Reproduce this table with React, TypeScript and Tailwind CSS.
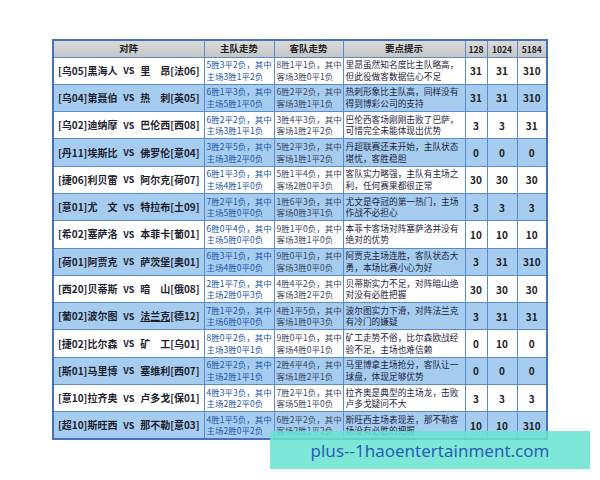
import React from "react";

type Row = {
  hl: string; // left tag
  hn: string; // home name
  al: string; // away tag
  an: string; // away name
  home: [string, string];
  away: [string, string];
  tip: [string, string];
  n: [string, string, string];
  link?: boolean;
};

const rows: Row[] = [
  { hl: "[乌05]", hn: "黑海人", an: "里昂", al: "[法06]", home: ["5胜3平2负，其中", "主场3胜1平2负"], away: ["8胜1平1负，其中", "客场3胜0平1负"], tip: ["里昂虽然知名度比主队略高，", "但此役做客数据信心不足"], n: ["31", "31", "310"] },
  { hl: "[乌04]", hn: "第聂伯", an: "热刺", al: "[英05]", home: ["6胜1平3负，其中", "主场5胜1平0负"], away: ["6胜2平2负，其中", "客场3胜1平1负"], tip: ["热刺形象比主队高，同样没有", "得到博彩公司的支持"], n: ["31", "31", "310"] },
  { hl: "[乌02]", hn: "迪纳摩", an: "巴伦西", al: "[西08]", home: ["6胜2平2负，其中", "主场3胜1平1负"], away: ["3胜4平3负，其中", "客场1胜2平2负"], tip: ["巴伦西客场刚刚击败了巴萨，", "可惜完全未能体现出优势"], n: ["3", "3", "31"] },
  { hl: "[丹11]", hn: "埃斯比", an: "佛罗伦", al: "[意04]", home: ["3胜2平5负，其中", "主场3胜2平0负"], away: ["5胜2平3负，其中", "客场1胜1平2负"], tip: ["丹超联赛还未开始，主队状态", "堪忧，客胜稳胆"], n: ["0", "0", "0"] },
  { hl: "[捷06]", hn: "利贝雷", an: "阿尔克", al: "[荷07]", home: ["6胜1平3负，其中", "主场4胜1平0负"], away: ["5胜1平4负，其中", "客场2胜0平3负"], tip: ["客队实力略强，主队有主场之", "利，任何赛果都很正常"], n: ["30", "30", "30"] },
  { hl: "[意01]", hn: "尤文", an: "特拉布", al: "[土09]", home: ["7胜2平1负，其中", "主场5胜0平0负"], away: ["1胜6平3负，其中", "客场0胜3平1负"], tip: ["尤文是夺冠的第一热门，主场", "作战不必担心"], n: ["3", "3", "3"] },
  { hl: "[希02]", hn: "塞萨洛", an: "本菲卡", al: "[葡01]", home: ["6胜0平4负，其中", "主场5胜0平0负"], away: ["9胜1平0负，其中", "客场3胜1平0负"], tip: ["本菲卡客场对阵塞萨洛并没有", "绝对的优势"], n: ["10", "10", "10"] },
  { hl: "[荷01]", hn: "阿贾克", an: "萨茨堡", al: "[奥01]", home: ["6胜3平1负，其中", "主场4胜0平0负"], away: ["9胜0平1负，其中", "客场3胜0平0负"], tip: ["阿贾克主场连胜，客队状态大", "勇，本场比赛小心为好"], n: ["3", "31", "310"] },
  { hl: "[西20]", hn: "贝蒂斯", an: "暗山", al: "[俄08]", home: ["2胜1平7负，其中", "主场2胜0平3负"], away: ["4胜4平2负，其中", "客场3胜2平2负"], tip: ["贝蒂斯实力不足，对阵暗山绝", "对没有必胜把握"], n: ["30", "30", "30"] },
  { hl: "[葡02]", hn: "波尔图", an: "法兰克", al: "[德12]", home: ["7胜1平2负，其中", "主场6胜0平0负"], away: ["4胜1平5负，其中", "客场1胜0平3负"], tip: ["波尔图实力下滑，对阵法兰克", "有冷门的嫌疑"], n: ["3", "31", "31"], link: true },
  { hl: "[捷02]", hn: "比尔森", an: "矿工", al: "[乌01]", home: ["8胜0平2负，其中", "主场3胜0平1负"], away: ["9胜0平1负，其中", "客场4胜0平1负"], tip: ["矿工走势不俗，比尔森欧战经", "验不足，主场也难信赖"], n: ["0", "10", "0"] },
  { hl: "[斯01]", hn: "马里博", an: "塞维利", al: "[西07]", home: ["6胜2平2负，其中", "主场2胜1平1负"], away: ["2胜4平4负，其中", "客场1胜2平1负"], tip: ["马里博拿主场抢分，客队让一", "球盘，体现足够优势"], n: ["0", "0", "0"] },
  { hl: "[意10]", hn: "拉齐奥", an: "卢多戈", al: "[保01]", home: ["4胜3平3负，其中", "主场2胜2平0负"], away: ["7胜2平1负，其中", "客场5胜1平0负"], tip: ["拉齐奥是典型的主场龙，击败", "卢多戈疑问不大"], n: ["3", "3", "3"] },
  { hl: "[超10]", hn: "斯旺西", an: "那不勒", al: "[意03]", home: ["4胜1平5负，其中", "主场2胜0平2负"], away: ["6胜2平2负，其中", "客场2胜1平2负"], tip: ["斯旺西主场表现差，那不勒客", "场没有必胜的把握"], n: ["10", "10", "310"] },
];

// spread a 2-char name over 3-char width
function Name({ text, link }: { text: string; link?: boolean }) {
  return (
    <span className={"flex w-[30px] justify-between" + (link ? " underline" : "")}>
      {text.split("").map((c, i) => (
        <span key={i}>{c}</span>
      ))}
    </span>
  );
}

const cell = "border border-[#5b8bc9] align-middle";

export default function App() {
  return (
    <div className="relative min-h-[480px] w-[600px] bg-white pt-[39px] pl-[52px] font-['Noto_Sans_CJK_SC',sans-serif]">
      <table className="table-fixed border-collapse border-2 border-[#4573b8] text-[#222]">
        <colgroup>
          <col className="w-[151px]" />
          <col className="w-[70px]" />
          <col className="w-[69px]" />
          <col className="w-[122px]" />
          <col className="w-[22px]" />
          <col className="w-[30px]" />
          <col className="w-[30px]" />
        </colgroup>
        <thead>
          <tr className="h-[17px] bg-gradient-to-b from-[#dcdcdc] to-[#c6c6c6] text-[9.5px] font-bold leading-none">
            <th className={cell}>对阵</th>
            <th className={cell}>主队走势</th>
            <th className={cell}>客队走势</th>
            <th className={cell}>要点提示</th>
            <th className={cell + " text-[8.5px]"}>128</th>
            <th className={cell + " text-[8.5px]"}>1024</th>
            <th className={cell + " text-[8.5px]"}>5184</th>
          </tr>
        </thead>
        <tbody>
          {rows.map((r, i) => (
            <tr key={i} className={"h-[27.3px] " + (i % 2 ? "bg-[#a6cdf0]" : "bg-white")}>
              <td className={cell + " px-[4px]"}>
                <div className="flex items-center justify-between text-[10px] font-bold leading-none text-[#1e1e2e]">
                  <span className="flex">
                    {r.hl}
                    <Name text={r.hn} />
                  </span>
                  <span className="text-[9px] text-[#223]">VS</span>
                  <span className="flex">
                    <Name text={r.an} link={r.link} />
                    {r.al}
                  </span>
                </div>
              </td>
              <td className={cell + " pl-[2px] text-[8.5px] leading-[11.5px] text-[#2456a8]"}>
                <div className="whitespace-nowrap">{r.home[0]}</div>
                <div className="whitespace-nowrap">{r.home[1]}</div>
              </td>
              <td className={cell + " pl-[2px] text-[8.5px] leading-[11.5px] text-[#3b4763]"}>
                <div className="whitespace-nowrap">{r.away[0]}</div>
                <div className="whitespace-nowrap">{r.away[1]}</div>
              </td>
              <td className={cell + " pl-[2px] text-[8.7px] leading-[11.5px] text-[#1c2340]"}>
                <div className="whitespace-nowrap">{r.tip[0]}</div>
                <div className="whitespace-nowrap">{r.tip[1]}</div>
              </td>
              {r.n.map((v, j) => (
                <td key={j} className={cell + " text-center text-[10px] font-bold text-[#222]"}>
                  {v}
                </td>
              ))}
            </tr>
          ))}
        </tbody>
      </table>

      <div className="absolute left-[270px] top-[431px] flex h-[38px] w-[320px] items-center justify-center bg-[#66e4d0]/85">
        <span className="font-['Noto_Sans',sans-serif] text-[17px] leading-none text-[#2d5db6]">
          plus--1haoentertainment.com
        </span>
      </div>
    </div>
  );
}
